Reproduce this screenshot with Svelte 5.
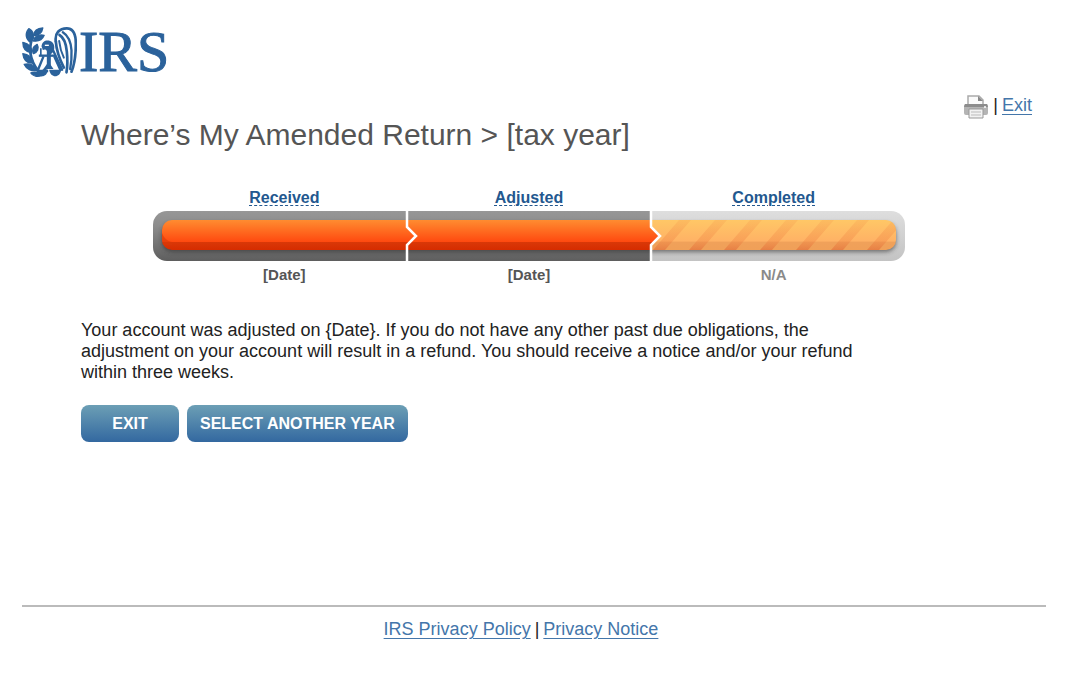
<script lang="ts">
  interface Step {
    label: string;
    date: string;
    done: boolean;
  }

  const steps: Step[] = [
    { label: 'Received', date: '[Date]', done: true },
    { label: 'Adjusted', date: '[Date]', done: true },
    { label: 'Completed', date: 'N/A', done: false },
  ];

  const stripes = [500, 536, 571, 607, 643, 678, 714];
</script>

<div class="page">
  <header>
    <div class="logo">
      <svg class="eagle" viewBox="0 0 164 150" width="55" height="50" aria-hidden="true">
        <!-- laurel branch -->
        <g fill="#2b629b" stroke="#2b629b" stroke-width="4" stroke-linejoin="round">
          <path d="M20 5C36 14 38 30 25 46 10 36 8 18 20 5z" />
          <path d="M62 3C60 18 48 27 34 26 36 10 44 4 62 3z" />
          <path d="M66 25C60 40 48 44 34 42 38 28 50 22 66 25z" />
          <path d="M2 46C20 50 30 60 29 78 10 76 2 64 2 46z" />
          <path d="M45 52C52 64 46 76 34 80 28 68 34 58 45 52z" />
          <path d="M2 80C18 82 32 92 34 108 14 110 4 98 2 80z" />
          <path d="M6 112C22 108 38 114 46 130 28 134 12 126 6 112z" />
          <path d="M26 138C38 134 50 136 58 146 46 150 32 148 26 138z" />
        </g>
        <path d="M34 28C18 56 20 98 50 134" fill="none" stroke="#2b629b" stroke-width="8" />
        <!-- head and neck -->
        <path d="M58 58C60 42 72 38 84 42c10 4 14 14 12 24-1 8-6 12-10 16v40H74V72c-2-5-6-6-12-3z" fill="#2b629b" />
        <path d="M68 55h12" stroke="#fff" stroke-width="4" />
        <path d="M56 86V64" stroke="#2b629b" stroke-width="5" />
        <!-- wing -->
        <g fill="none" stroke="#2b629b" stroke-linecap="round">
          <path d="M101 44C97 18 112 4 134 4c20 0 27 18 27 46 0 36-3 60-13 84" stroke-width="8" />
          <path d="M101 44c2 30 10 50 24 78" stroke-width="8" />
          <path d="M112 24c14 8 20 28 22 50 2 20 3 38-1 62" stroke-width="8" />
          <path d="M122 16c16 10 24 28 26 54 1 24-1 40-4 56" stroke-width="7" />
          <path d="M111 42c2 18 6 34 14 50" stroke-width="6" />
          <path d="M92 68l28 60" stroke-width="7" />
        </g>
        <!-- scales -->
        <g fill="none" stroke="#2b629b" stroke-width="7">
          <path d="M50 86h50" />
          <path d="M64 88l-18 44M78 118l-16 14 16 0M96 88l20 44" />
        </g>
        <path d="M42 128h35c-2 26-31 26-35 0zM81 128h36c-3 26-32 26-36 0z" fill="#2b629b" />
        <path d="M64 126h30l-15-22z" fill="#2b629b" />
      </svg>
      <span>IRS</span>
    </div>
    <div class="tools">
      <button class="print" type="button" aria-label="Print">
        <svg viewBox="0 0 26 24" width="26" height="24" aria-hidden="true">
          <path d="M5 9V1h11l4 4v4" fill="#fafafa" stroke="#aaa" stroke-width="1.5" />
          <path d="M15 1v5h5z" fill="#888" />
          <rect x="1" y="9" width="24" height="11" rx="2" fill="#b4b4b4" />
          <path d="M2 9h22l1 3H1z" fill="#8c8c8c" />
          <circle cx="22" cy="12" r="1" fill="#fff" />
          <path d="M6 14h14v9H6z" fill="#f2f2f2" stroke="#999" />
          <path d="M8 17h10M8 20h10" stroke="#bbb" />
        </svg>
      </button>
      <span class="bar">|</span>
      <a href="#exit">Exit</a>
    </div>
  </header>

  <main>
    <h1>Where’s My Amended Return &gt; [tax year]</h1>

    <section class="progress" aria-label="Return status">
      <div class="row labels">
        {#each steps as step (step.label)}
          <a href="#{step.label.toLowerCase()}">{step.label}</a>
        {/each}
      </div>

      <svg class="track" viewBox="0 0 752 50" aria-hidden="true">
        <defs>
          <linearGradient id="dark" x2="0" y2="1">
            <stop offset="0" stop-color="#979797" />
            <stop offset="0.3" stop-color="#8c8c8c" />
            <stop offset="1" stop-color="#5e5e5e" />
          </linearGradient>
          <linearGradient id="light" x2="0" y2="1">
            <stop offset="0" stop-color="#dedede" />
            <stop offset="1" stop-color="#c3c3c3" />
          </linearGradient>
          <linearGradient id="orange" x2="0" y2="1">
            <stop offset="0" stop-color="#ff8c30" />
            <stop offset="0.72" stop-color="#ff4a10" />
            <stop offset="0.74" stop-color="#d93808" />
            <stop offset="1" stop-color="#d62c00" />
          </linearGradient>
          <linearGradient id="amber" x2="0" y2="1">
            <stop offset="0" stop-color="#ffc766" />
            <stop offset="0.7" stop-color="#ffb265" />
            <stop offset="0.74" stop-color="#f0a15a" />
            <stop offset="1" stop-color="#f0a058" />
          </linearGradient>
          <linearGradient id="stripe" gradientUnits="userSpaceOnUse" x1="0" y1="9" x2="0" y2="39">
            <stop offset="0" stop-color="#ee8040" stop-opacity="0.15" />
            <stop offset="0.7" stop-color="#ee8040" stop-opacity="0.35" />
            <stop offset="1" stop-color="#e06a38" stop-opacity="0.6" />
          </linearGradient>
          <filter id="shade" x="-5%" y="-30%" width="110%" height="180%">
            <feGaussianBlur stdDeviation="2" />
          </filter>
          <clipPath id="track"><rect width="752" height="50" rx="14" /></clipPath>
          <clipPath id="fill"><rect x="9" y="9" width="734" height="30" rx="10" /></clipPath>
        </defs>
        <g clip-path="url(#track)">
          <path d="M0 0h498v50H0z" fill="url(#dark)" />
          <path d="M498 0h254v50H498z" fill="url(#light)" />
          <rect x="9" y="12" width="734" height="29" rx="10" fill="#333" opacity="0.6" filter="url(#shade)" />
        </g>
        <g clip-path="url(#fill)">
          <path d="M490 9h262v30H490z" fill="url(#amber)" />
          {#each stripes as x (x)}
            <path d="M{x} 39l26-30h12l-26 30z" fill="url(#stripe)" />
          {/each}
          <path d="M0 9h498v7l9 9-9 9v5H0z" fill="url(#orange)" />
          <path d="M9 22v12h10v-3c-5-1-8-4-10-9z" fill="#d93808" opacity="0.6" />
        </g>
        <g fill="none" stroke="#fff" stroke-width="2.5">
          <path d="M254 0v16l9 9-9 9v16" />
          <path d="M498 0v16l9 9-9 9v16" />
        </g>
      </svg>

      <div class="row dates">
        {#each steps as step (step.label)}
          <span class:pending={!step.done}>{step.date}</span>
        {/each}
      </div>
    </section>

    <p>
      Your account was adjusted on &lbrace;Date&rbrace;. If you do not have any other past due obligations, the
      adjustment on your account will result in a refund. You should receive a notice and/or your refund
      within three weeks.
    </p>

    <div class="actions">
      <button type="button">EXIT</button>
      <button type="button">SELECT ANOTHER YEAR</button>
    </div>
  </main>

  <footer>
    <a href="#policy">IRS Privacy Policy</a>
    <span>|</span>
    <a href="#notice">Privacy Notice</a>
  </footer>
</div>

<style>
  :global(body) {
    margin: 0;
    background: #fff;
  }

  .page {
    box-sizing: border-box;
    min-height: 100vh;
    display: flex;
    flex-direction: column;
    padding: 23px 20px 42px 22px;
    font-family: 'Liberation Sans', Arial, sans-serif;
    font-size: 18px;
    color: #222;
  }

  header {
    display: flex;
    justify-content: space-between;
    align-items: flex-end;
    padding-right: 14px;
  }

  .logo {
    display: flex;
    align-items: center;
    gap: 2px;
    height: 58px;
    margin-bottom: 38px;
    font-family: 'Liberation Serif', 'Times New Roman', serif;
    font-size: 58px;
    line-height: 58px;
    color: #2b629b;
    -webkit-text-stroke: 1px #2b629b;
  }

  .tools {
    display: flex;
    align-items: center;
    gap: 4px;
    line-height: 20px;
  }

  .print {
    display: flex;
    padding: 4px 0 0;
    border: 0;
    background: none;
  }

  a {
    color: #4476aa;
    text-underline-offset: 3px;
  }

  main {
    padding: 0 59px;
  }

  h1 {
    margin: 0;
    font-size: 30px;
    line-height: 32px;
    font-weight: 400;
    color: #555;
  }

  .progress {
    max-width: 752px;
    margin: 37px 0 0 72px;
    line-height: 20px;
    font-weight: 700;
  }

  .row {
    display: grid;
    grid-template-columns: repeat(3, 1fr);
    justify-items: center;
    padding: 0 9px;
  }

  .labels {
    font-size: 16px;
    padding-bottom: 3px;
  }

  .labels a {
    color: #23588f;
    text-decoration: underline dashed;
    text-decoration-thickness: 1px;
    text-underline-offset: 2px;
  }

  .track {
    display: block;
    width: 100%;
  }

  .dates {
    padding-top: 4px;
    font-size: 15px;
    color: #555;
  }

  .pending {
    color: #8a8a8a;
  }

  p {
    max-width: 790px;
    margin: 35px 0 22px;
    line-height: 21px;
  }

  .actions {
    display: flex;
    gap: 8px;
  }

  .actions button {
    height: 37px;
    min-width: 98px;
    padding: 0 13px;
    border: 0;
    border-radius: 8px;
    background: linear-gradient(#6c9fb5, #3368a0);
    color: #fff;
    font: 700 16px 'Liberation Sans', Arial, sans-serif;
  }

  footer {
    display: flex;
    justify-content: center;
    gap: 4px;
    margin-top: auto;
    padding: 12px 26px 0 0;
    border-top: 2px solid #bbb;
    line-height: 21px;
  }
</style>
